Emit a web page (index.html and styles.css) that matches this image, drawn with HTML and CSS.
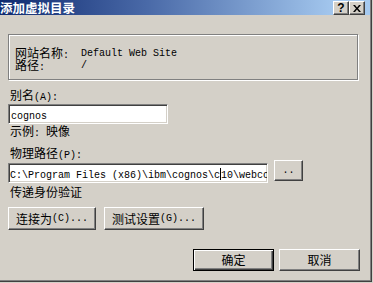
FILE: index.html
```html
<!DOCTYPE html>
<html>
<head>
<meta charset="utf-8">
<link rel="stylesheet" href="styles.css">
</head>
<body>
<div class="window">
  <div class="titlebar">
    <span class="title">添加虚拟目录</span>
    <div class="caption-btns">
      <span class="cbtn help">?</span>
      <span class="cbtn close"><svg width="8" height="7" viewBox="0 0 8 7"><path d="M0 0h2l2 2.5L6 0h2L5 3.5 8 7H6L4 4.5 2 7H0l3-3.5z" fill="#000"/></svg></span>
    </div>
  </div>
  <div class="content">
    <div class="group">
      <div class="grow"><span class="glabel">网站名称<span class="m">:</span></span><span class="m">Default Web Site</span></div>
      <div class="grow"><span class="glabel">路径<span class="m">:</span></span><span class="m">/</span></div>
    </div>
    <div class="label lbl-alias">别名<span class="m">(A):</span></div>
    <div class="edit edit-alias"><span class="m">cognos</span></div>
    <div class="label lbl-example">示例<span class="m">: </span>映像</div>
    <div class="label lbl-path">物理路径<span class="m">(P):</span></div>
    <div class="path-row">
      <div class="edit edit-path"><span class="m">C:\Program Files (x86)\ibm\cognos\c<span class="caret"></span>10\webcontent</span></div>
      <div class="btn btn-browse"><span class="m">..</span></div>
    </div>
    <div class="label lbl-auth">传递身份验证</div>
    <div class="btn-row">
      <div class="btn btn-connect">连接为<span class="m">(C)...</span></div>
      <div class="btn btn-test">测试设置<span class="m">(G)...</span></div>
    </div>
    <div class="footer">
      <div class="btn btn-dlg btn-default">确定</div>
      <div class="btn btn-dlg">取消</div>
    </div>
  </div>
</div>
</body>
</html>
```

FILE: styles.css
```css
html, body {
  margin: 0;
  padding: 0;
  background: #d4d0c8;
}
body {
  width: 373px;
  height: 283px;
  overflow: hidden;
  font-family: "Noto Sans CJK SC", "Noto Sans", sans-serif;
  font-size: 12px;
  line-height: 12px;
  color: #000;
}
.window {
  box-sizing: border-box;
  width: 372px;
  height: 282px;
  background: #d4d0c8;
  border-right: 1px solid #404040;
  border-bottom: 1px solid #404040;
  box-shadow: inset -1px -1px 0 #808080;
}
.m {
  font-family: "Liberation Mono", monospace;
  font-size: 10px;
}
.titlebar {
  display: flex;
  align-items: flex-start;
  justify-content: space-between;
  width: 370px;
  height: 15px;
  background: linear-gradient(to right, #0f2a70 0%, #4a6aa8 40%, #a6caf0 92%);
}
.title {
  color: #fff;
  font-weight: bold;
  font-size: 12.5px;
  line-height: 15px;
}
.caption-btns {
  display: flex;
  margin-top: 1px;
  padding-right: 5px;
}
.cbtn {
  box-sizing: border-box;
  width: 16px;
  height: 14px;
  display: flex;
  align-items: center;
  justify-content: center;
  background: #d4d0c8;
  border: 1px solid;
  border-color: #fff #404040 #404040 #fff;
  box-shadow: inset -1px -1px 0 #808080;
}
.help {
  font-family: "Liberation Sans", sans-serif;
  font-weight: bold;
  font-size: 12px;
  line-height: 12px;
}
.content {
  display: flex;
  flex-direction: column;
  align-items: flex-start;
}
.group {
  box-sizing: border-box;
  width: 350px;
  height: 46px;
  margin: 19px 0 0 8px;
  padding: 13px 0 0 6px;
  border: 1px solid #808080;
  box-shadow: 1px 1px 0 #fff, inset 1px 1px 0 #fff;
}
.grow {
  display: flex;
  align-items: center;
  height: 12px;
  line-height: 12px;
}
.glabel {
  width: 66px;
  flex: none;
}
.label {
  margin-left: 10px;
  height: 12px;
  line-height: 12px;
  white-space: nowrap;
}
.lbl-alias { margin-top: 9px; }
.lbl-example { margin-top: 1px; }
.lbl-path { margin-top: 10px; }
.lbl-auth { margin-top: 3px; }
.edit {
  box-sizing: border-box;
  height: 20px;
  margin-left: 8px;
  background: #fff;
  border: 1px solid;
  border-color: #808080 #fff #fff #808080;
  box-shadow: inset 1px 1px 0 #404040, inset -1px -1px 0 #d4d0c8;
  line-height: 18px;
  white-space: nowrap;
  overflow: hidden;
}
.edit-alias {
  width: 160px;
  margin-top: 3px;
  padding-left: 2px;
}
.edit-path {
  width: 260px;
  margin-top: 3px;
  padding-left: 1px;
}
.caret {
  display: inline-block;
  width: 1px;
  height: 12px;
  background: #000;
  vertical-align: -2px;
}
.path-row {
  display: flex;
  align-items: flex-start;
  margin-top: 1px;
}
.btn {
  box-sizing: border-box;
  display: flex;
  align-items: center;
  justify-content: center;
  background: #d4d0c8;
  border: 1px solid;
  border-color: #fff #404040 #404040 #fff;
  box-shadow: inset -1px -1px 0 #808080;
  white-space: nowrap;
}
.btn-browse {
  width: 29px;
  height: 21px;
  margin-left: 6px;
}
.btn-row {
  display: flex;
  gap: 8px;
  margin: 9px 0 0 8px;
}
.btn-connect {
  width: 88px;
  height: 23px;
}
.btn-test {
  width: 100px;
  height: 23px;
}
.footer {
  display: flex;
  justify-content: flex-end;
  gap: 5px;
  box-sizing: border-box;
  width: 371px;
  padding-right: 11px;
  margin-top: 19px;
}
.btn-dlg {
  width: 81px;
  height: 22px;
}
.btn-default {
  border: 1px solid #000;
  box-shadow: inset 1px 1px 0 #fff, inset -1px -1px 0 #404040, inset -2px -2px 0 #808080;
}
```
